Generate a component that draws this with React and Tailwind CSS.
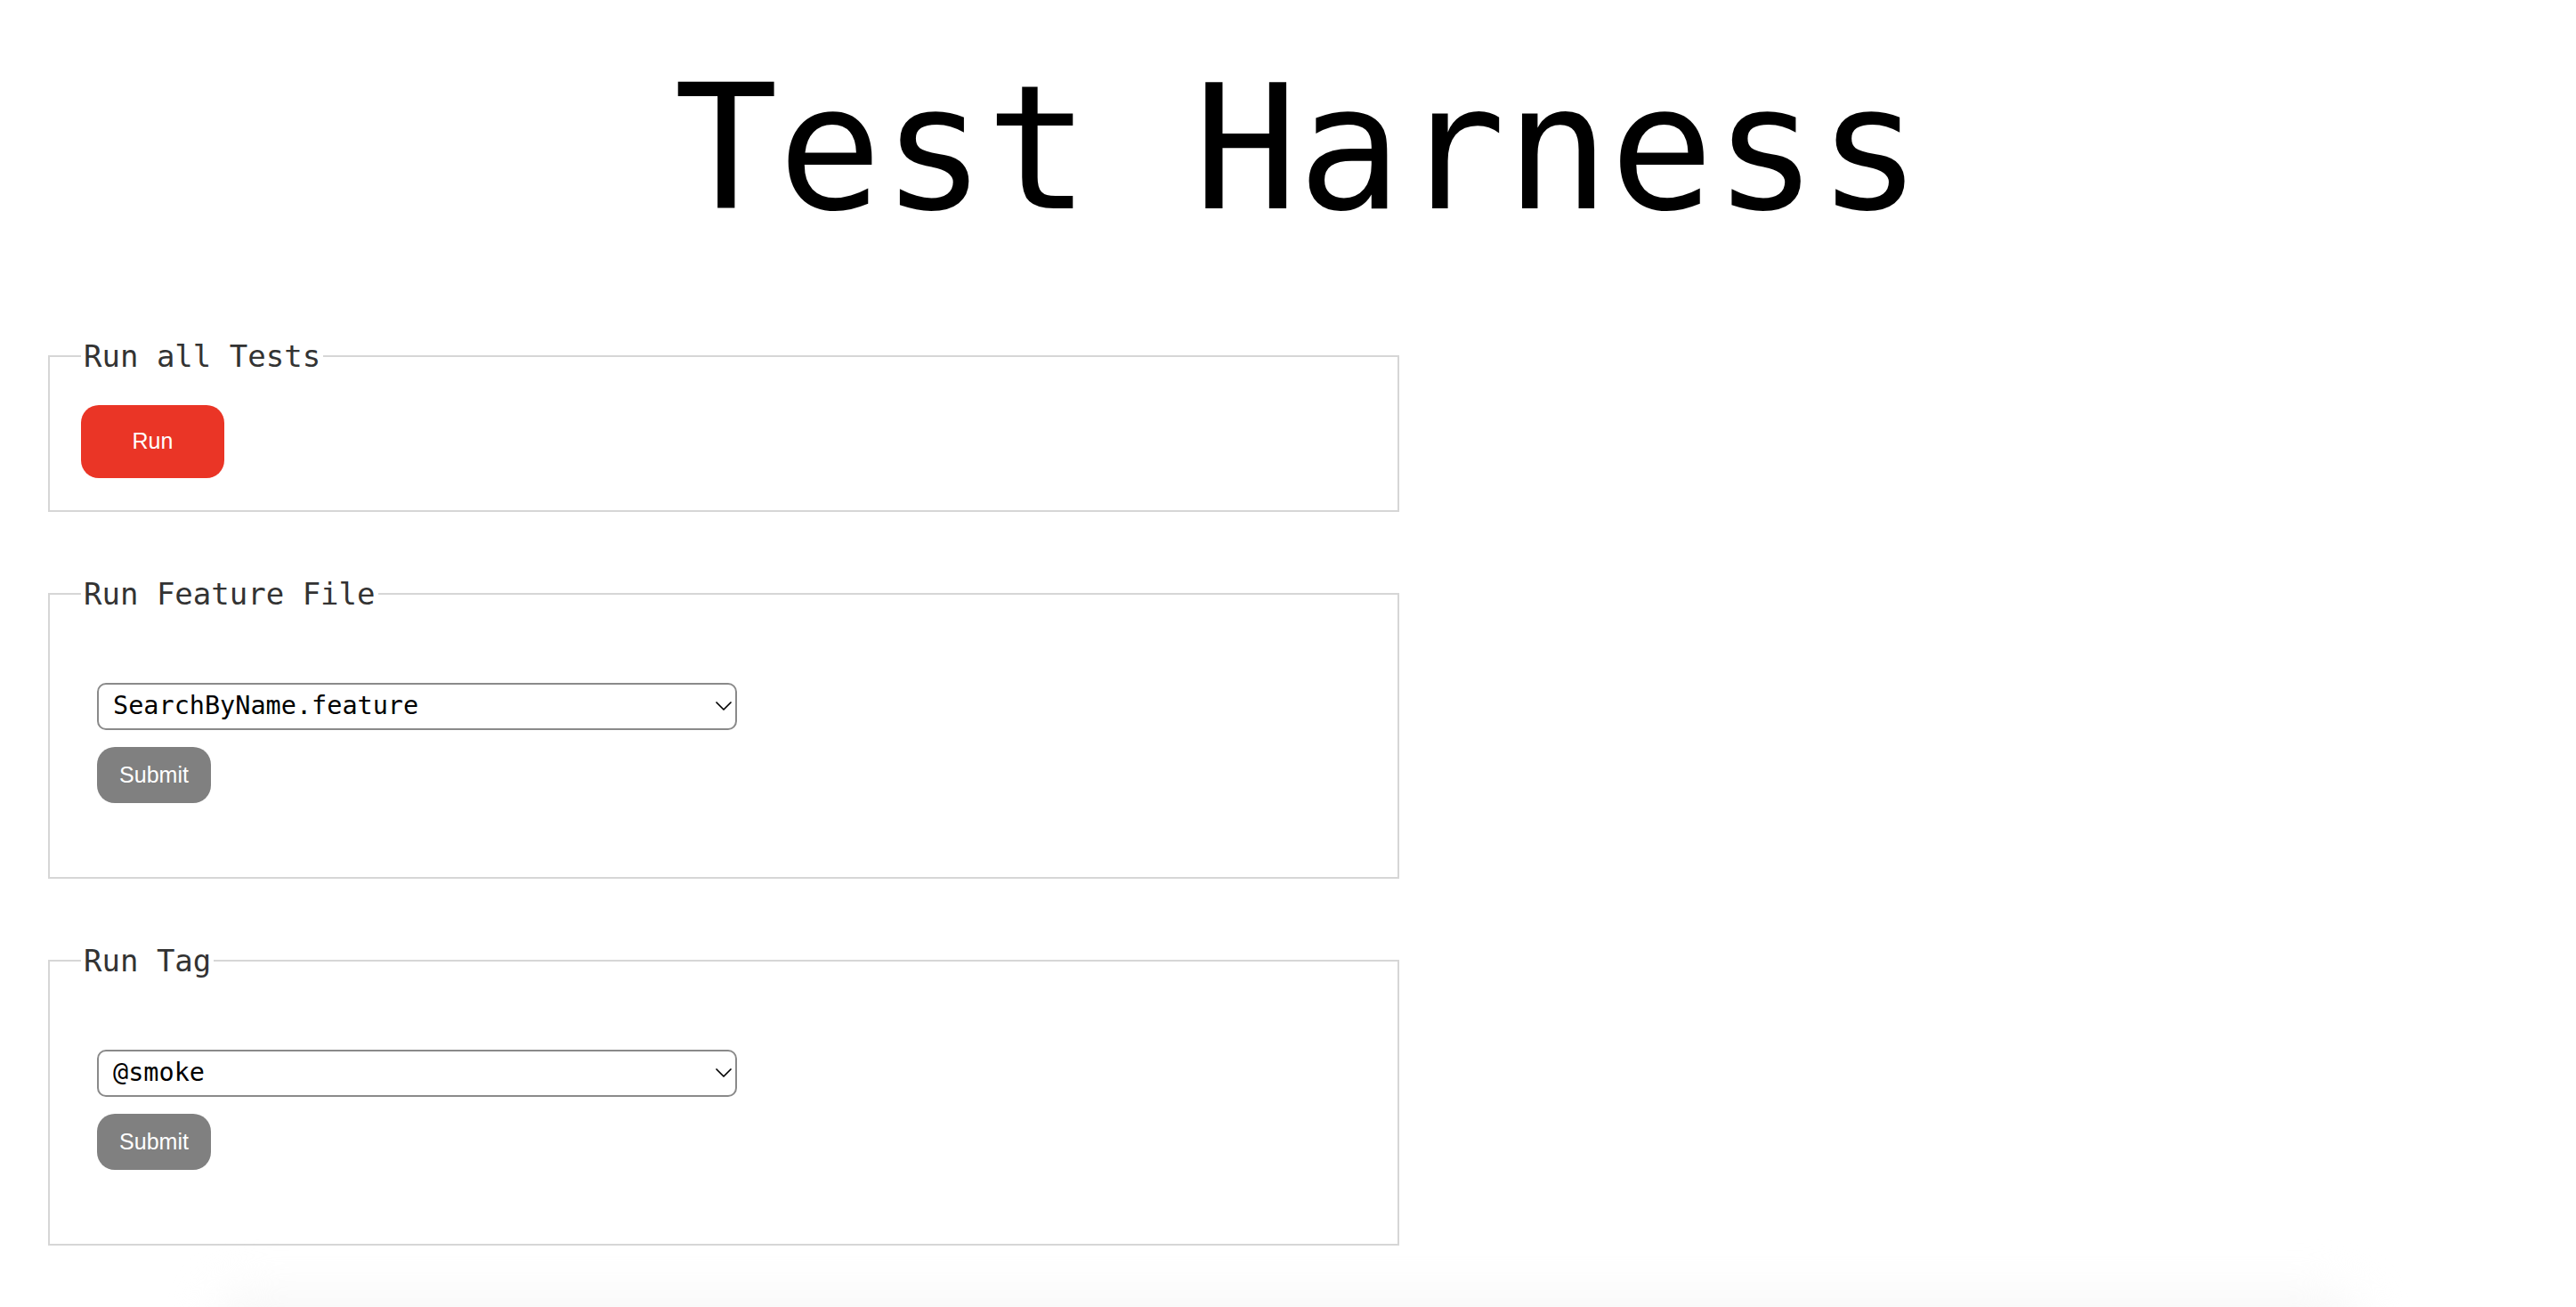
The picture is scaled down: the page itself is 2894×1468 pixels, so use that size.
import { ChevronDown } from "lucide-react";

const mono = "font-['DejaVu_Sans_Mono',monospace]";
const sans = "font-['Liberation_Sans',Arial,sans-serif]";

function Section({ title, children }) {
  return (
    <fieldset className="border-2 border-[#d6d6d6] px-[35px] pt-[35px] pb-[36px]">
      <legend className={`px-[3px] text-[34px] leading-[40px] text-[#333333] ${mono}`}>
        {title}
      </legend>
      {children}
    </fieldset>
  );
}

function PickAndSubmit({ options }) {
  return (
    <form className="px-[18px] pt-[45px] pb-[47px] flex flex-col items-start gap-[19px]" onSubmit={(e) => e.preventDefault()}>
      <div className="relative w-[719px]">
        <select
          className={`appearance-none w-full h-[53px] pl-[16px] pr-[40px] rounded-[10px] border-2 border-[#8a8a8a] bg-white text-black text-[28.5px] ${mono}`}
        >
          {options.map((o) => (
            <option key={o}>{o}</option>
          ))}
        </select>
        <ChevronDown
          className="absolute right-[-1px] top-[10px] w-[32px] h-[32px] text-black pointer-events-none"
          strokeWidth={1.3}
        />
      </div>
      <button
        type="submit"
        className={`w-[128px] h-[63px] rounded-[20px] bg-[#808080] text-white text-[25px] ${sans}`}
      >
        Submit
      </button>
    </form>
  );
}

export default function App() {
  return (
    <div className="h-screen overflow-hidden bg-white">
      <h1 className={`pt-[70px] pl-[22px] text-center text-[194px] leading-none text-black font-normal ${mono}`}>
        Test Harness
      </h1>

      <div className="mt-[116px] ml-[54px] w-[1518px] flex flex-col gap-[72px]">
        <Section title="Run all Tests">
          <button className={`w-[161px] h-[82px] rounded-[20px] bg-[#ea3526] text-white text-[25px] ${sans}`}>
            Run
          </button>
        </Section>

        <Section title="Run Feature File">
          <PickAndSubmit options={["SearchByName.feature"]} />
        </Section>

        <Section title="Run Tag">
          <PickAndSubmit options={["@smoke"]} />
        </Section>
      </div>

      {/* faint shadow peeking up from below the fold */}
      <div className="mt-[50px] mx-[240px] h-[80px] rounded-[40px] bg-[#f8f8f8] blur-xl" />
    </div>
  );
}
